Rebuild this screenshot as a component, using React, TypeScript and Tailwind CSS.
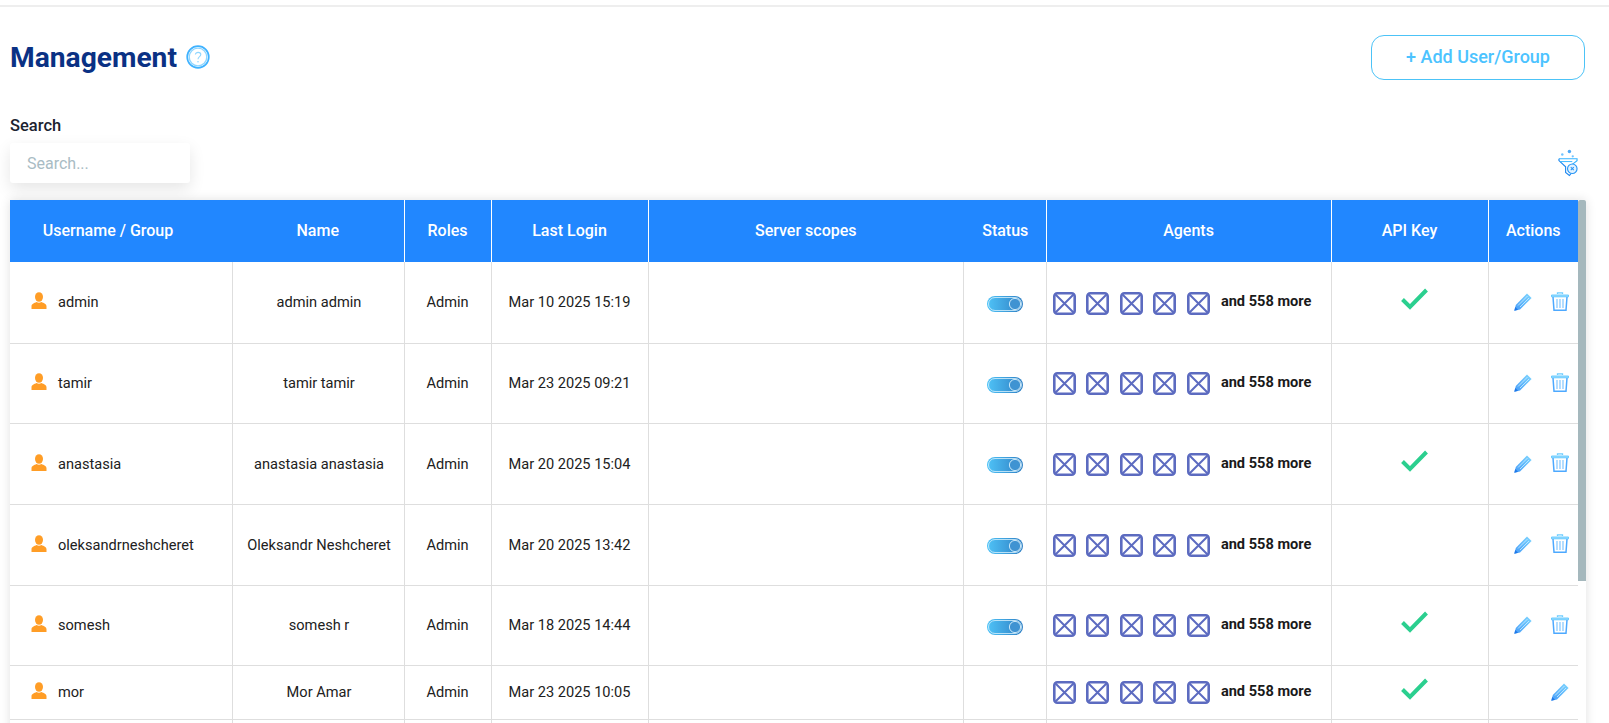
import React from 'react';

interface User {
  username: string;
  name: string;
  lastLogin: string;
  apiKey: boolean;
  deletable: boolean;
  height: string;
}

const users: User[] = [
  { username: 'admin', name: 'admin admin', lastLogin: 'Mar 10 2025 15:19', apiKey: true, deletable: true, height: 'h-[81px]' },
  { username: 'tamir', name: 'tamir tamir', lastLogin: 'Mar 23 2025 09:21', apiKey: false, deletable: true, height: 'h-[80px]' },
  { username: 'anastasia', name: 'anastasia anastasia', lastLogin: 'Mar 20 2025 15:04', apiKey: true, deletable: true, height: 'h-[81px]' },
  { username: 'oleksandrneshcheret', name: 'Oleksandr Neshcheret', lastLogin: 'Mar 20 2025 13:42', apiKey: false, deletable: true, height: 'h-[81px]' },
  { username: 'somesh', name: 'somesh r', lastLogin: 'Mar 18 2025 14:44', apiKey: true, deletable: true, height: 'h-[80px]' },
  { username: 'mor', name: 'Mor Amar', lastLogin: 'Mar 23 2025 10:05', apiKey: true, deletable: false, height: 'h-[54px]' },
];

function PersonIcon() {
  return (
    <svg width="16" height="17" viewBox="0 0 16 17" className="mb-[5px] shrink-0">
      <ellipse cx="8" cy="5" rx="4" ry="4.8" fill="#ff9d26" />
      <path d="M0.5 17 V14.2 C0.5 12 3 11.2 5.6 10 C7 11 9 11 10.4 10 C13 11.2 15.5 12 15.5 14.2 V17 Z" fill="#ff9d26" />
    </svg>
  );
}

function BoxXIcon() {
  return (
    <svg width="23" height="23" viewBox="0 0 23 23" className="shrink-0">
      <rect x="1.3" y="1.3" width="20.4" height="20.4" rx="3" fill="none" stroke="#5c6bc0" strokeWidth="2.6" />
      <path d="M2 2 L21 21 M21 2 L2 21" stroke="#5c6bc0" strokeWidth="2" />
    </svg>
  );
}

function SwitchIcon() {
  return (
    <svg width="36" height="16" viewBox="0 0 36 16" className="mt-[1px]">
      <defs>
        <linearGradient id="sw" x1="0" x2="1" y1="0" y2="0">
          <stop offset="0" stopColor="#4fc3f7" />
          <stop offset="1" stopColor="#2f7fc4" />
        </linearGradient>
      </defs>
      <rect x="0" y="0" width="36" height="16" rx="8" fill="url(#sw)" />
      <rect x="1.5" y="1.5" width="33" height="13" rx="6.5" fill="none" stroke="#d8f1fd" strokeWidth="0.8" />
      <circle cx="28" cy="8" r="5.6" fill="#3f93d2" stroke="#d8f1fd" strokeWidth="0.9" />
    </svg>
  );
}

function CheckIcon() {
  return (
    <svg width="27" height="22" viewBox="0 0 27 22" className="mb-[8px] ml-[9px]">
      <path d="M1.5 11.5 L9 19 L25.5 2" fill="none" stroke="#2bcf8f" strokeWidth="4" />
    </svg>
  );
}

function PencilIcon() {
  return (
    <svg width="18" height="18" viewBox="0 0 18 18" className="shrink-0">
      <defs>
        <linearGradient id="pen" x1="0" x2="1" y1="1" y2="0">
          <stop offset="0" stopColor="#459bf8" />
          <stop offset="1" stopColor="#7ed6ff" />
        </linearGradient>
      </defs>
      <path d="M13 0.5 L17.6 5 L6 16.4 L0.3 17.7 L1.8 12 Z" fill="url(#pen)" />
      <path d="M4 12.5 L13.5 3 M6 14 L15 5" stroke="#d2f0ff" strokeWidth="0.8" />
      <path d="M0.3 17.7 L1.3 14 L4 16.8 Z" fill="#1f78e8" />
    </svg>
  );
}

function TrashIcon() {
  return (
    <svg width="18" height="19" viewBox="0 0 18 19" className="mb-[2px] shrink-0">
      <path d="M6.5 2 V0.8 H11.5 V2" fill="none" stroke="#6fcdff" strokeWidth="1.3" />
      <path d="M0.5 3 H17.5 V4.8 H0.5 Z" fill="#9fe0ff" stroke="#5fc6ff" strokeWidth="0.9" />
      <path d="M2 5 L3 18.2 H15 L16 5" fill="none" stroke="#4da9ff" strokeWidth="1.5" />
      <path d="M6 7 V16 M9 7 V16 M12 7 V16" stroke="#80c6ff" strokeWidth="1.2" />
    </svg>
  );
}

function HelpIcon() {
  return (
    <svg width="24" height="24" viewBox="0 0 24 24" className="shrink-0">
      <circle cx="12" cy="12" r="10.8" fill="none" stroke="#3fb2ff" strokeWidth="1.7" />
      <circle cx="12" cy="12" r="8.8" fill="none" stroke="#8fd6ff" strokeWidth="1.3" />
      <path d="M9.4 9.6 C9.4 6.6 14.8 6.6 14.8 9.6 C14.8 11.6 12 11.6 12 14.2" fill="none" stroke="#8fd6ff" strokeWidth="1.1" />
      <circle cx="12" cy="16.8" r="0.8" fill="#8fd6ff" />
    </svg>
  );
}

function FilterIcon() {
  return (
    <svg width="20" height="28" viewBox="0 0 21 28">
      <circle cx="4.5" cy="5" r="1.3" fill="#6fc3ff" />
      <circle cx="12" cy="2" r="1.8" fill="#4fa8f5" />
      <circle cx="15.5" cy="7" r="1.2" fill="#6fc3ff" />
      <path d="M1 9.5 H20 V11.5 L15 15.5" fill="none" stroke="#35b4ff" strokeWidth="1.2" />
      <path d="M1 9.5 V11.5 L8 18 V24 L12 27 L13.5 25.5" fill="none" stroke="#1e88f0" strokeWidth="1.2" />
      <path d="M2 12.5 H15" stroke="#35b4ff" strokeWidth="1" />
      <circle cx="15" cy="20" r="5" fill="#e2f3ff" stroke="#2a96f5" strokeWidth="1.2" />
      <path d="M13.4 18.4 L16.6 21.6 M16.6 18.4 L13.4 21.6" stroke="#2a96f5" strokeWidth="1.1" />
    </svg>
  );
}

const th = 'font-medium text-[16px] text-white text-center align-middle p-0';
const td = 'border-b border-r border-[#dedede] text-center align-middle pt-[2px]';

export default function App() {
  return (
    <div className="h-screen overflow-hidden bg-white text-[14.6px] text-[#212121]" style={{ fontFamily: 'Roboto, "Liberation Sans", sans-serif' }}>
      <div className="mt-[5px] h-[2px] bg-[#eeeeee]" />

      <div className="pl-[10px] pr-[24px]">
        {/* title row */}
        <div className="flex items-center justify-between pt-[28px]">
          <div className="flex items-center gap-[9px]">
            <h1 className="pt-[2px] text-[28.2px] font-bold leading-none text-[#0a3184]">Management</h1>
            <HelpIcon />
          </div>
          <button className="h-[45px] w-[214px] rounded-[13px] border border-[#4cc3f7] pb-[2px] text-[18px] font-medium text-[#4cc3ff]">
            + Add User/Group
          </button>
        </div>

        {/* search */}
        <label className="mt-[36px] block text-[16.5px] font-medium leading-[20px] text-[#1c2330]">Search</label>
        <div className="mt-[7px] flex items-center justify-between">
          <div className="flex h-[40px] w-[180px] items-center rounded-[3px] bg-white pl-[17px] pt-[1px] text-[16px] text-[#a9bcc4] shadow-[0_6px_16px_rgba(0,0,0,0.1)]">
            Search...
          </div>
          <div className="mr-[7px]">
            <FilterIcon />
          </div>
        </div>

        {/* table */}
        <div className="mt-[17px] flex w-[1576px] shadow-[0_0_10px_rgba(0,0,0,0.12)]">
          <table className="w-[1568px] table-fixed border-collapse">
            <colgroup>
              <col className="w-[222px]" />
              <col className="w-[172px]" />
              <col className="w-[87px]" />
              <col className="w-[157px]" />
              <col className="w-[315px]" />
              <col className="w-[83px]" />
              <col className="w-[285px]" />
              <col className="w-[157px]" />
              <col className="w-[90px]" />
            </colgroup>
            <thead>
              <tr className="h-[62px] bg-[#2187ff]">
                <th className={`${th} pr-[26px]`}>Username / Group</th>
                <th className={`${th} border-r border-white`}>Name</th>
                <th className={`${th} border-r border-white`}>Roles</th>
                <th className={`${th} border-r border-white`}>Last Login</th>
                <th className={th}>Server scopes</th>
                <th className={`${th} border-r border-white pl-[2px]`}>Status</th>
                <th className={`${th} border-r border-white`}>Agents</th>
                <th className={`${th} border-r border-white`}>API Key</th>
                <th className={th}>Actions</th>
              </tr>
            </thead>
            <tbody>
              {users.map((user, index) => (
                <tr key={user.username} className={user.height}>
                  <td className={td}>
                    <div className="flex items-center gap-[11px] pl-[21px]">
                      <PersonIcon />
                      <span>{user.username}</span>
                    </div>
                  </td>
                  <td className={`${td} pl-[2px]`}>{user.name}</td>
                  <td className={td}>Admin</td>
                  <td className={td}>{user.lastLogin}</td>
                  <td className={td} />
                  <td className={td}>
                    {index < 5 && (
                      <div className="flex justify-center">
                        <SwitchIcon />
                      </div>
                    )}
                  </td>
                  <td className={td}>
                    <div className="flex items-center pl-[6px]">
                      <div className="flex gap-[10.6px]">
                        <BoxXIcon />
                        <BoxXIcon />
                        <BoxXIcon />
                        <BoxXIcon />
                        <BoxXIcon />
                      </div>
                      <span className="mb-[2px] ml-[11px] text-[14.6px] font-bold text-[#1a1a1a]">and 558 more</span>
                    </div>
                  </td>
                  <td className={td}>
                    {user.apiKey && (
                      <div className="flex justify-center">
                        <CheckIcon />
                      </div>
                    )}
                  </td>
                  <td className="border-b border-[#dedede] p-0 align-middle">
                    <div className="flex items-center justify-end gap-[19px] pr-[9px]">
                      <PencilIcon />
                      {user.deletable && <TrashIcon />}
                    </div>
                  </td>
                </tr>
              ))}
              <tr className="h-[20px]">
                <td className="border-r border-[#dedede]" />
                <td className="border-r border-[#dedede]" />
                <td className="border-r border-[#dedede]" />
                <td className="border-r border-[#dedede]" />
                <td className="border-r border-[#dedede]" />
                <td className="border-r border-[#dedede]" />
                <td className="border-r border-[#dedede]" />
                <td className="border-r border-[#dedede]" />
                <td />
              </tr>
            </tbody>
          </table>

          {/* scrollbar */}
          <div className="w-2 shrink-0">
            <div className="h-[381px] rounded-t-[2px] bg-[#a5b8bd]" />
          </div>
        </div>
      </div>
    </div>
  );
}
